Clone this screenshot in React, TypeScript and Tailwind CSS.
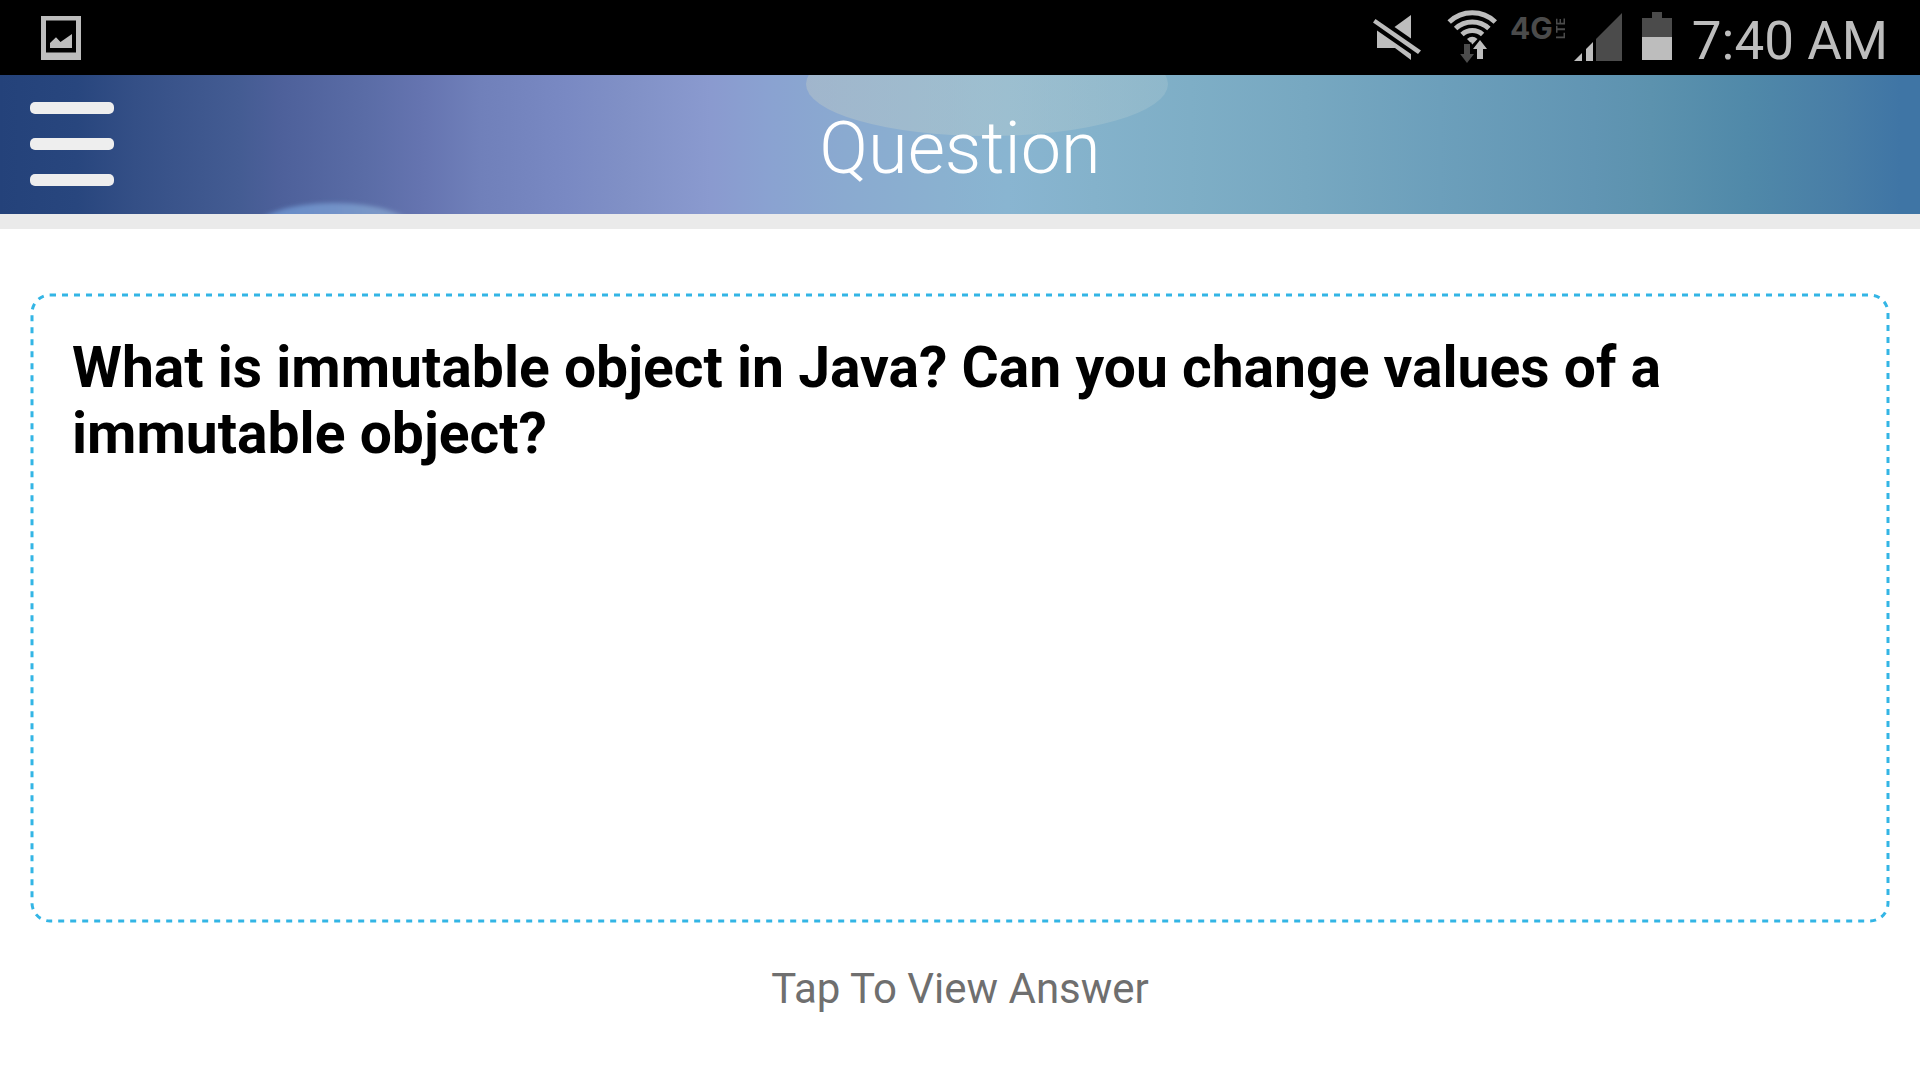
function StatusBar() {
  return (
    <div className="flex h-[75px] items-center bg-black pl-[41px] pr-8 text-[#bdbdbd]">
      <svg className="h-[75px] w-10" viewBox="41 0 40 75" role="img" aria-label="Screenshot saved">
        <path fill="currentColor" fillRule="evenodd" d="M41 16h40v44H41zM46 20.5v32h30v-32z" />
        <path fill="currentColor" d="M50 48v-5l6-5.7 4.5 4.8L72 34v14z" />
      </svg>

      <div className="ml-auto flex items-center">
        <svg className="mr-6 h-[75px] w-[50px]" viewBox="12 0 50 75" role="img" aria-label="Sound off">
          <g fill="currentColor">
            <path d="M15.5 19 61 50.5 58 54 13 22.5z" />
            <path d="M34.5 27 51 15v23.5z" />
            <path d="M17 30.5 51 54v6L35 48H17z" />
          </g>
        </svg>

        <svg className="mr-3 h-[75px] w-[52px]" viewBox="86 0 52 75" role="img" aria-label="Wi-Fi">
          <g fill="none" stroke="currentColor" strokeWidth="5">
            <path d="M89.2 22A33.4 33.4 0 0 1 135.3 22" />
            <path d="M95.6 28.5A24.4 24.4 0 0 1 128.9 28.5" />
            <path d="M102 34.5A15.5 15.5 0 0 1 122.6 34.5" />
          </g>
          <path fill="currentColor" d="M107 39Q112.2 34.6 117.5 39L112.3 44.5z" />
          <path fill="#4b4b4b" stroke="#000" strokeWidth="3" paintOrder="stroke" d="M104 44h6v10h4l-7 9-6.800-9H104z" />
          <path fill="currentColor" stroke="#000" strokeWidth="3" paintOrder="stroke" d="M120 40l7 9h-4v10h-6V49h-4z" />
        </svg>

        <div className="mr-2 mt-4 flex h-6 items-center gap-[3px] self-start font-['Inter',sans-serif] font-bold text-[#4b4b4b]">
          <span className="text-[30px] leading-6">4G</span>
          <span className="rotate-180 text-[12px] leading-[10px] [writing-mode:vertical-rl]">LTE</span>
        </div>

        <svg className="mr-5 h-[75px] w-12" viewBox="14 0 48 75" role="img" aria-label="Mobile signal">
          <path fill="currentColor" d="M14 61l8-8v8zM26 61V49l7-7v19z" />
          <path fill="#4b4b4b" d="M36 61V39l26-26v48z" />
        </svg>

        <svg className="mr-5 h-[75px] w-[30px]" viewBox="83 0 30 75" role="img" aria-label="Battery">
          <path fill="#4b4b4b" d="M83 18h10v-6h10v6h10v19H83z" />
          <path fill="currentColor" d="M83 37h30v23H83z" />
        </svg>

        <time className="pt-[6px] text-[53px] leading-[64px]">7:40 AM</time>
      </div>
    </div>
  );
}

function HeaderBubbles() {
  return (
    <svg className="absolute inset-0 h-full w-full" viewBox="0 0 1920 139" preserveAspectRatio="none" aria-hidden="true">
      <defs>
        <linearGradient id="large-bubble">
          <stop offset="0" stopColor="#b9c6c8" stopOpacity="0.48" />
          <stop offset="0.5" stopColor="#b9cdce" stopOpacity="0.42" />
          <stop offset="1" stopColor="#b0cbd3" stopOpacity="0.32" />
        </linearGradient>
        <linearGradient id="small-bubble">
          <stop offset="0" stopColor="#648ac8" />
          <stop offset="0.5" stopColor="#7292c8" />
          <stop offset="1" stopColor="#829cc6" />
        </linearGradient>
        <filter id="bubble-edge" x="-20%" y="-20%" width="140%" height="140%">
          <feGaussianBlur stdDeviation="3 2" />
        </filter>
      </defs>
      <ellipse cx="987" cy="9" rx="181" ry="52" fill="url(#large-bubble)" />
      <ellipse cx="334" cy="155" rx="80" ry="27" fill="url(#small-bubble)" filter="url(#bubble-edge)" />
    </svg>
  );
}

function Header() {
  return (
    <header className="relative grid h-[154px] grid-cols-[1fr_auto_1fr] items-center border-b-[15px] border-[#eaeaea] bg-[linear-gradient(90deg,#24427a_0%,#28467e_4%,#344f86_7%,#445c93_12.5%,#4d609a_14.5%,#5a6ca6_19%,#6574b0_22%,#7080ba_25%,#7989c3_29.5%,#8090c6_32.5%,#8a9acf_37%,#8aa2d1_40%,#8aaad0_44%,#8ab1d0_49%,#89b5d1_52.5%,#84b2cb_57%,#7eaec6_62%,#77a8c1_68%,#6c9fbb_75%,#6195b3_83%,#5c92ae_86%,#5089a9_91%,#487da6_96%,#3f75a5_99%,#3f75a5_100%)] px-[30px] pb-px">
      <HeaderBubbles />
      <button type="button" aria-label="Open menu" className="relative flex w-[84px] flex-col gap-6">
        <span className="h-3 w-full rounded-[5px] bg-[#eeeeee]" />
        <span className="h-3 w-full rounded-[5px] bg-[#eeeeee]" />
        <span className="h-3 w-full rounded-[5px] bg-[#eeeeee]" />
      </button>
      <h1 className="relative pt-[10px] text-[72px] font-light leading-[84px] text-white">Question</h1>
    </header>
  );
}

function DashedOutline() {
  return (
    <svg className="pointer-events-none absolute inset-0 h-full w-full" aria-hidden="true">
      <rect
        x="2"
        y="2"
        rx="18"
        fill="none"
        stroke="#33b5e5"
        strokeWidth="3"
        strokeDasharray="6 6"
        className="h-[calc(100%-4px)] w-[calc(100%-4px)]"
      />
    </svg>
  );
}

export default function App() {
  return (
    <div className="flex min-h-screen flex-col bg-white font-['Roboto',sans-serif]">
      <StatusBar />
      <Header />
      <main className="flex flex-1 flex-col px-[30px] pt-16">
        <section className="relative flex-1 p-[42px]">
          <DashedOutline />
          <h2 className="text-[57px] font-bold leading-[66px] text-black">
            What is immutable object in Java? Can you change values of a immutable object?
          </h2>
        </section>
        <button type="button" className="mb-[66px] mt-[41px] text-[42px] leading-[50px] text-[#6f6f6f]">
          Tap To View Answer
        </button>
      </main>
    </div>
  );
}
